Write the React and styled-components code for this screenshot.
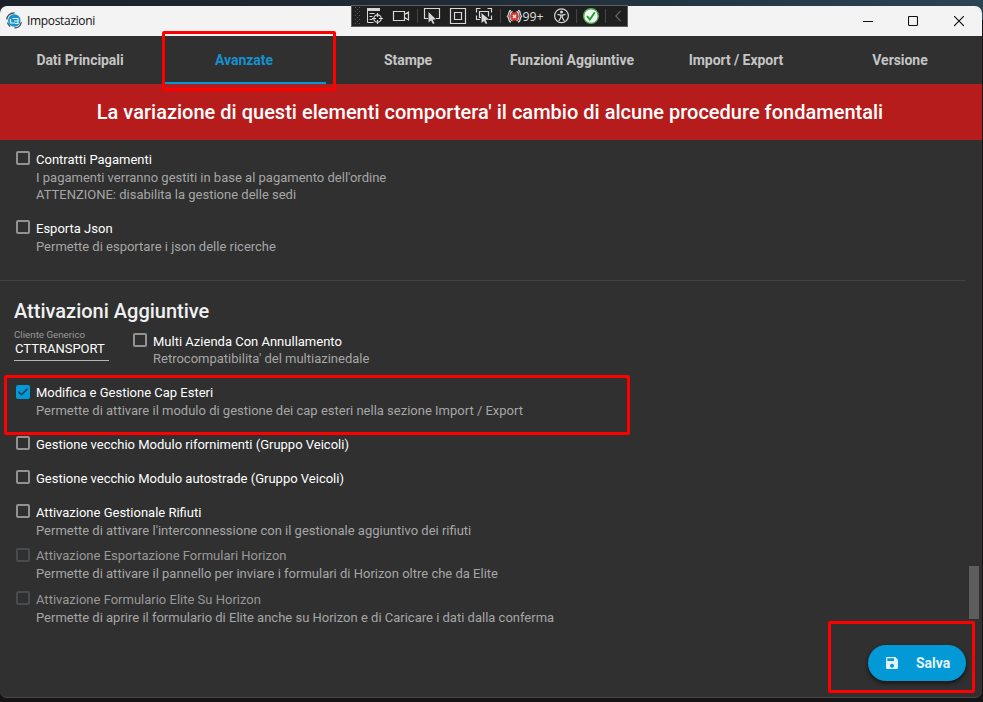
import React from "react";
import styled, { createGlobalStyle } from "styled-components";

const GlobalStyle = createGlobalStyle`
  * { box-sizing: border-box; }
  body { margin: 0; background: #161415; overflow: hidden; font-family: Roboto, sans-serif; }
`;

const Desktop = styled.div`
  position: relative;
  width: 983px;
  height: 702px;
  padding-top: 6px;
  background: linear-gradient(90deg, #1a2128, #1f2d38 50%, #2c4354) 0 0 / 100% 20px no-repeat, #161415;
`;

const Window = styled.div`
  display: flex;
  flex-direction: column;
  width: 982px;
  height: 692px;
  border-radius: 7px;
  overflow: hidden;
  background: #303030;
  border-bottom: 1px solid #484848;
`;

const TitleBar = styled.header`
  display: flex;
  align-items: center;
  flex: 0 0 30px;
  padding-left: 6px;
  background: #f3f3f3;
  color: #111;
`;

const WindowTitle = styled.span`
  flex: 1;
  margin-left: 5px;
  font: 12px/16px "Open Sans", sans-serif;
  letter-spacing: -0.33px;
`;

const WindowButton = styled.span`
  display: flex;
  justify-content: center;
  width: 46px;
`;

const Tabs = styled.nav`
  display: grid;
  grid-template-columns: repeat(6, 164px);
  flex: 0 0 48px;
  margin-left: -2px;
`;

const Tab = styled.div`
  display: flex;
  align-items: center;
  justify-content: center;
  padding-top: 2px;
  border-bottom: 2px solid ${(p) => (p.$active ? "#0398d6" : "transparent")};
  color: ${(p) => (p.$active ? "#1590cf" : "#c5c5c5")};
  font-size: 14px;
  font-weight: 700;
  letter-spacing: -0.05px;
`;

const Banner = styled.div`
  display: flex;
  align-items: center;
  justify-content: center;
  flex: 0 0 56px;
  padding-right: 2px;
  background: #b71c1c;
  color: #fff;
  font-size: 20px;
  font-weight: 500;
  letter-spacing: 0.01px;
`;

const Content = styled.main`
  display: flex;
  flex-direction: column;
  padding: 10px 17px 0 14px;
`;

const Option = styled.div`
  display: grid;
  grid-template-columns: 14px 1fr;
  column-gap: 6px;
  align-items: start;
  height: ${(p) => p.$height}px;
  padding: 1px 0 0 2px;
`;

const Box = styled.span`
  display: flex;
  width: 14px;
  height: 14px;
  border: 2px solid ${(p) => (p.$disabled ? "#484c4e" : "#929292")};
  border-radius: 2px;
  ${(p) => p.$checked && "background: #0398d6; border: 0;"}
`;

const OptionText = styled.div`
  margin-top: ${(p) => (p.$raised ? -1 : 0)}px;
  font-size: 13px;
  line-height: 17px;
  white-space: nowrap;
  color: #a6a6a6;
`;

const OptionTitle = styled.div`
  height: ${(p) => (p.$tight ? 17 : 18)}px;
  line-height: 18px;
  color: ${(p) => (p.$disabled ? "#989898" : "#ffffff")};
`;

const Divider = styled.hr`
  width: 965px;
  height: 1px;
  margin: 0 0 0 -14px;
  border: 0;
  background: #424242;
`;

const Heading = styled.h2`
  height: 51px;
  margin: 0;
  padding-top: 18px;
  color: #f0f0f0;
  font-size: 20px;
  font-weight: 500;
  line-height: 24px;
`;

const FieldRow = styled.div`
  display: flex;
  gap: 22px;
  height: 52px;
`;

const Field = styled.label`
  width: 95px;
  height: 32px;
  margin-top: -3px;
  border-bottom: 1px solid #b5b5b5;
`;

const FieldLabel = styled.div`
  color: #999;
  font-size: 9.75px;
  line-height: 12px;
`;

const FieldValue = styled.div`
  padding-left: 1px;
  color: #fff;
  font-size: 13px;
  line-height: 15px;
`;

const SaveButton = styled.button`
  position: absolute;
  left: 868px;
  top: 645px;
  display: flex;
  align-items: center;
  gap: 16px;
  width: 98px;
  height: 36px;
  padding: 0 0 0 16px;
  border: 0;
  border-radius: 18px;
  background: #0398d6;
  box-shadow: 0 2px 4px rgba(0, 0, 0, 0.65);
  color: #e2f3fb;
  font: 700 14px Roboto, sans-serif;
`;

const ScrollThumb = styled.div`
  position: absolute;
  left: 969px;
  top: 566px;
  width: 10px;
  height: 53px;
  background: #5d5d5d;
`;

const Highlight = styled.div`
  position: absolute;
  left: ${(p) => p.$x}px;
  top: ${(p) => p.$y}px;
  width: ${(p) => p.$w}px;
  height: ${(p) => p.$h}px;
  border: 3px solid #fe0000;
  border-radius: 2px;
`;

const DebugBar = styled.div`
  position: absolute;
  left: 351px;
  top: 5px;
  display: flex;
  width: 277px;
  height: 22px;
  border: 1px solid #606060;
  background: #1f1f1f;
`;

const LogoIcon = () => (
  <svg width="16" height="18" viewBox="0 0 16 18" fill="none">
    <circle cx="8.3" cy="8.5" r="6.2" fill="#1593cf" />
    <path d="M.8 7.5C1 3.7 4 .7 8.5 1M15.3 10c-.5 3.5-3 5.8-6.8 6M1.5 10.5c.6 2 1.5 3.2 2.8 4" stroke="#46525b" strokeWidth="1.3" />
    <path d="M4.5 7v4H9M6.5 6.5H12v5H9M8 9h4" stroke="#e8f6fd" strokeWidth="1.2" />
  </svg>
);

const DebugIcons = () => (
  <svg width="275" height="20" viewBox="352 6 275 20" fill="none" stroke="#d6d6d6">
    <g fill="#606060" stroke="none">
      {[0, 1, 2, 3, 4, 5, 6, 7, 8].map((i) => (
        <React.Fragment key={i}>
          <rect x={i % 2 ? 357 : 355} y={7 + i * 2} width="1" height="1" />
          <rect x={359} y={7 + i * 2} width={i % 2 ? 0 : 1} height="1" />
        </React.Fragment>
      ))}
    </g>
    <path d="M367 9.5h13" strokeWidth="3" />
    <path d="M367.5 9v13.5h6M369.5 13.5h5M369.5 16.5h3M369.5 19.5h3" />
    <circle cx="377.5" cy="18.5" r="3.7" strokeWidth="1.2" />
    <path d="M377.5 13v4M377.5 20v4M372 18.5h4M379 18.5h4" strokeWidth="1.2" />
    <path d="M393.5 11.5h11v9h-11zM404.5 14.5l4-2.5v8l-4-2.5" strokeWidth="1.2" />
    <path d="M417.5 9v14M500.5 9v14M576.5 9v14M605.5 9v14" stroke="#454545" />
    <path d="M428 18.5h-3.5v-10h15v10H436" strokeWidth="1.2" />
    <path d="M428.5 12v10.5l2.5-2 2 3.5 1.5-.8-1.8-3.5 3.3-.5z" fill="#d6d6d6" stroke="none" />
    <path d="M450.5 8.5h15v15h-15zM454.5 12.5h7v7h-7z" strokeWidth="1.2" />
    <path d="M476.5 12.5v-4h4M487.5 8.5h4v4M491.5 15.5v4h-3M480 19.5h-3.5v-4M481 17.5h-1.5v-6h9v5" strokeWidth="1.2" />
    <path d="M481.5 13v10l2.5-2 1.8 3 1.5-.7-1.7-3.3 3.4-.5z" fill="#d6d6d6" stroke="none" />
    <path d="M511 10.5c-3 0-1.5 4-3.5 5.7 2 1.7.5 5.8 3.5 5.8M518 10.5c3 0 1.5 4 3.5 5.7-2 1.7-.5 5.8-3.5 5.8M512.5 11.5c-2.5.5-2 3-2.5 4.7.5 1.8 0 4 2.5 4.8M516.5 11.5c2.5.5 2 3 2.5 4.7-.5 1.8 0 4-2.5 4.8" strokeWidth="1.3" />
    <circle cx="514.5" cy="16.5" r="4.2" fill="#e83427" stroke="none" />
    <path d="m513 15 3 3m0-3-3 3" stroke="#fff" strokeWidth="1.2" />
    <text x="522.5" y="21" fill="#dedede" stroke="none" fontFamily="Open Sans" fontSize="12.3">99+</text>
    <circle cx="561.5" cy="15.8" r="6.9" strokeWidth="1.2" />
    <circle cx="561.5" cy="12" r="1.5" fill="#d6d6d6" stroke="none" />
    <path d="m557.5 14.3 3 .8h2l3-.8M560.8 15v2.5l-2 3.5M562.3 15v2.5l2 3.5" strokeWidth="1.2" />
    <circle cx="591" cy="16" r="7.3" fill="#f3fff3" stroke="#57ae57" strokeWidth="1.4" />
    <path d="m587 16 2.8 3.5 5-7.3" stroke="#279b34" strokeWidth="2" />
    <path d="m620.5 11-4.7 5 4.7 5" stroke="#606060" strokeWidth="1.3" />
  </svg>
);

const FloppyIcon = () => (
  <svg width="16" height="16" viewBox="0 0 24 24">
    <path fill="#e2f3fb" d="M17 3H5a2 2 0 0 0-2 2v14a2 2 0 0 0 2 2h14a2 2 0 0 0 2-2V7l-4-4zm-5 16a3 3 0 1 1 0-6 3 3 0 0 1 0 6zm3-10H5V5h10v4z" />
  </svg>
);

function Setting({ title, lines = [], height, checked, disabled, raised, tight }) {
  return (
    <Option $height={height}>
      <Box $checked={checked} $disabled={disabled}>
        {checked && (
          <svg width="14" height="14" viewBox="0 0 14 14" fill="none">
            <path d="m2.5 6.8 3 3 6-6" stroke="#203c49" strokeWidth="1.5" />
          </svg>
        )}
      </Box>
      <OptionText $raised={raised}>
        <OptionTitle $disabled={disabled} $tight={tight}>{title}</OptionTitle>
        {lines.map((line) => <div key={line}>{line}</div>)}
      </OptionText>
    </Option>
  );
}

const tabs = ["Dati Principali", "Avanzate", "Stampe", "Funzioni Aggiuntive", "Import / Export", "Versione"];

export default function App() {
  return (
    <Desktop>
      <GlobalStyle />
      <Window>
        <TitleBar>
          <LogoIcon />
          <WindowTitle>Impostazioni</WindowTitle>
          <WindowButton><svg width="12" height="11"><path d="M2 5.5h10" stroke="#111" /></svg></WindowButton>
          <WindowButton><svg width="10" height="11" fill="none"><rect x=".5" y=".5" width="9" height="9" rx="1" stroke="#111" strokeWidth="1.1" /></svg></WindowButton>
          <WindowButton><svg width="10" height="11"><path d="m0 0 10 10m0-10-10 10" stroke="#111" strokeWidth="1.1" /></svg></WindowButton>
        </TitleBar>
        <Tabs>
          {tabs.map((name) => <Tab key={name} $active={name === "Avanzate"}>{name}</Tab>)}
        </Tabs>
        <Banner>La variazione di questi elementi comportera' il cambio di alcune procedure fondamentali</Banner>
        <Content>
          <Setting height={69} title="Contratti Pagamenti" lines={["I pagamenti verranno gestiti in base al pagamento dell'ordine", "ATTENZIONE: disabilita la gestione delle sedi"]} />
          <Setting height={61} title="Esporta Json" lines={["Permette di esportare i json delle ricerche"]} />
          <Divider />
          <Heading>Attivazioni Aggiuntive</Heading>
          <FieldRow>
            <Field>
              <FieldLabel>Cliente Generico</FieldLabel>
              <FieldValue>CTTRANSPORT</FieldValue>
            </Field>
            <Setting height={52} tight title="Multi Azienda Con Annullamento" lines={["Retrocompatibilita' del multiazinedale"]} />
          </FieldRow>
          <Setting height={51} checked raised title="Modifica e Gestione Cap Esteri" lines={["Permette di attivare il modulo di gestione dei cap esteri nella sezione Import / Export"]} />
          <Setting height={34} title="Gestione vecchio Modulo rifornimenti (Gruppo Veicoli)" />
          <Setting height={34} title="Gestione vecchio Modulo autostrade (Gruppo Veicoli)" />
          <Setting height={44} title="Attivazione Gestionale Rifiuti" lines={["Permette di attivare l'interconnessione con il gestionale aggiuntivo dei rifiuti"]} />
          <Setting height={43} disabled raised title="Attivazione Esportazione Formulari Horizon" lines={["Permette di attivare il pannello per inviare i formulari di Horizon oltre che da Elite"]} />
          <Setting height={44} disabled title="Attivazione Formulario Elite Su Horizon" lines={["Permette di aprire il formulario di Elite anche su Horizon e di Caricare i dati dalla conferma"]} />
        </Content>
      </Window>
      <DebugBar><DebugIcons /></DebugBar>
      <ScrollThumb />
      <SaveButton><FloppyIcon />Salva</SaveButton>
      <Highlight $x={162} $y={31} $w={174} $h={60} />
      <Highlight $x={4} $y={375} $w={626} $h={60} />
      <Highlight $x={828} $y={621} $w={147} $h={72} />
    </Desktop>
  );
}
